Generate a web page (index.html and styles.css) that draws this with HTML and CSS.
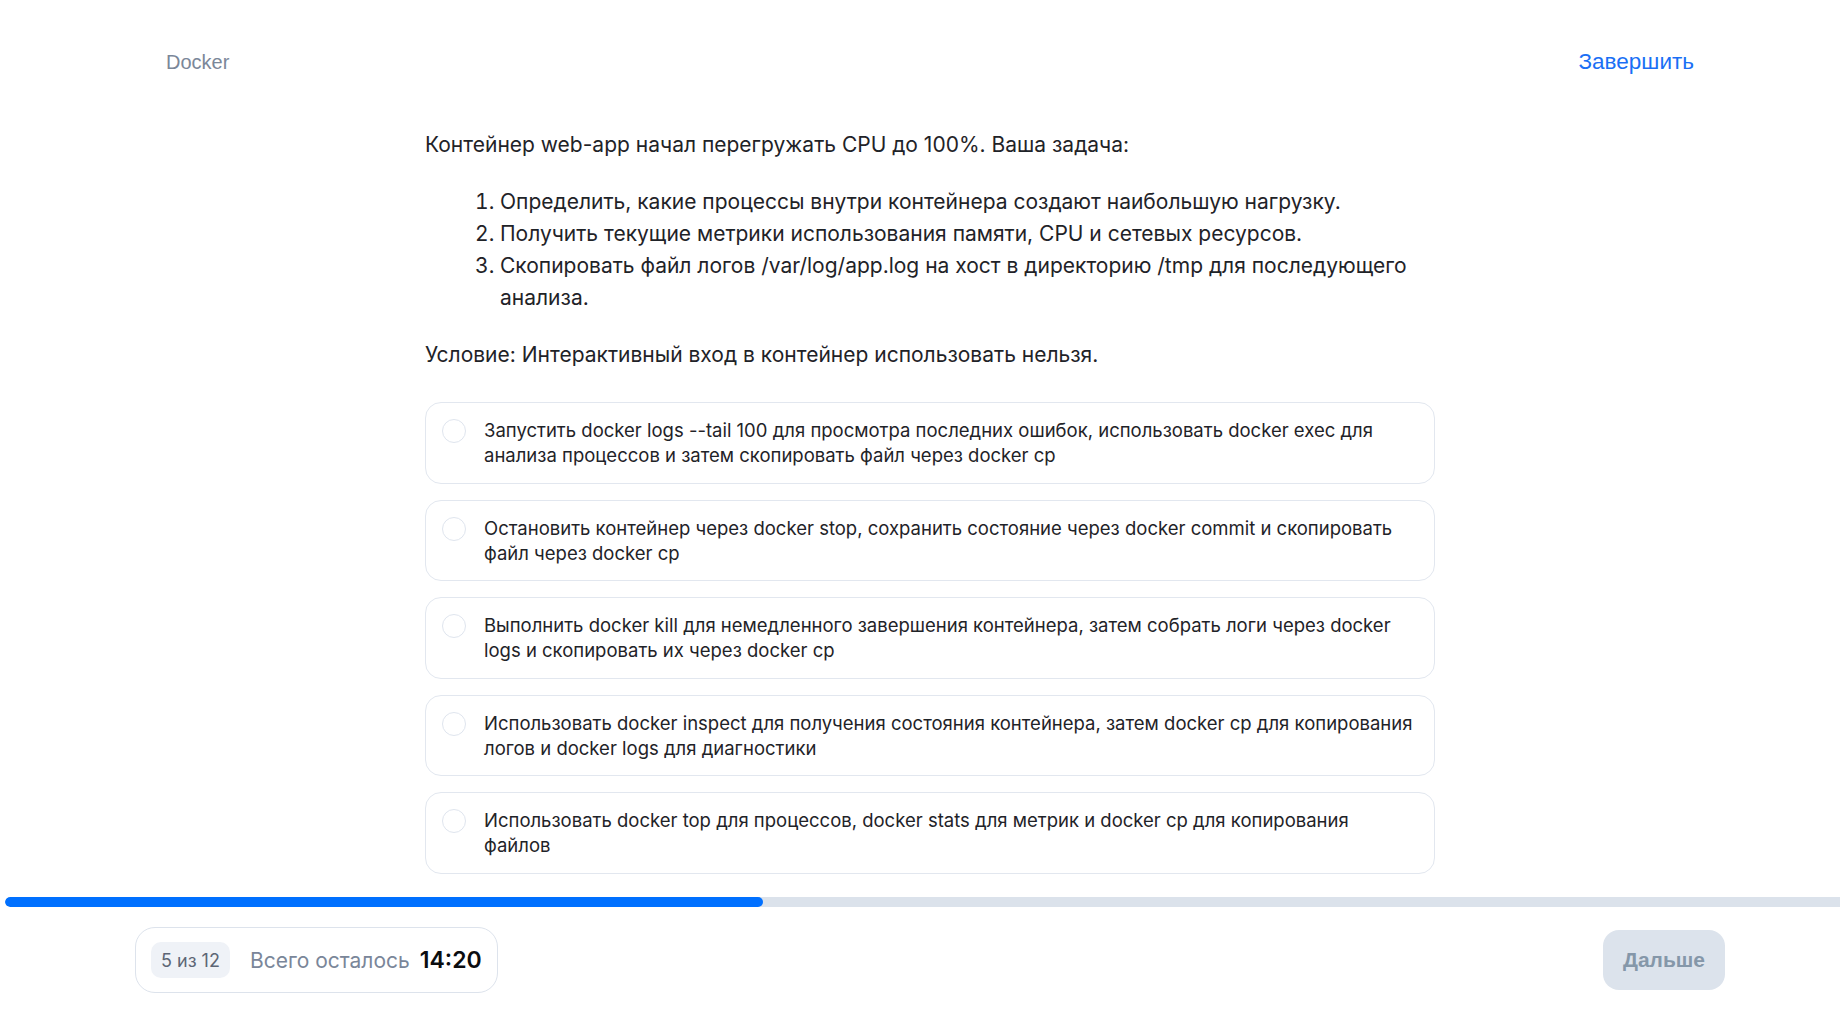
FILE: index.html
```html
<!DOCTYPE html>
<html lang="ru">
<head>
<meta charset="utf-8">
<title>Docker — вопрос 5 из 12</title>
<link rel="stylesheet" href="styles.css">
</head>
<body>
<div class="page">
  <div class="scroll">
    <header class="header">
      <span class="topic">Docker</span>
      <a class="finish" href="#">Завершить</a>
    </header>
    <main class="question">
      <p class="q-text">Контейнер web-app начал перегружать CPU до 100%. Ваша задача:</p>
      <ol class="q-list">
        <li>Определить, какие процессы внутри контейнера создают наибольшую нагрузку.</li>
        <li>Получить текущие метрики использования памяти, CPU и сетевых ресурсов.</li>
        <li>Скопировать файл логов /var/log/app.log на хост в директорию /tmp для последующего анализа.</li>
      </ol>
      <p class="q-text q-cond">Условие: Интерактивный вход в контейнер использовать нельзя.</p>
      <div class="options">
        <label class="option"><span class="radio"></span><span class="opt-text">Запустить docker logs --tail 100 для просмотра последних ошибок, использовать docker exec для анализа процессов и затем скопировать файл через docker cp</span></label>
        <label class="option"><span class="radio"></span><span class="opt-text">Остановить контейнер через docker stop, сохранить состояние через docker commit и скопировать файл через docker cp</span></label>
        <label class="option"><span class="radio"></span><span class="opt-text">Выполнить docker kill для немедленного завершения контейнера, затем собрать логи через docker logs и скопировать их через docker cp</span></label>
        <label class="option"><span class="radio"></span><span class="opt-text">Использовать docker inspect для получения состояния контейнера, затем docker cp для копирования логов и docker logs для диагностики</span></label>
        <label class="option"><span class="radio"></span><span class="opt-text">Использовать docker top для процессов, docker stats для метрик и docker cp для копирования файлов</span></label>
      </div>
    </main>
  </div>
  <footer class="footer">
    <div class="progress"><div class="progress-fill" style="width: 41.3%"></div></div>
    <div class="footer-row">
      <div class="timer-box">
        <span class="counter">5 из 12</span>
        <span class="left-label">Всего осталось</span>
        <span class="time">14:20</span>
      </div>
      <button class="next" type="button">Дальше</button>
    </div>
  </footer>
</div>
</body>
</html>
```

FILE: styles.css
```css
* { box-sizing: border-box; }

html, body {
  margin: 0;
  padding: 0;
  height: 100%;
  background: #ffffff;
}

body {
  font-family: Inter, "Noto Sans", sans-serif;
  color: #1f2328;
}

.page {
  height: 100vh;
  display: flex;
  flex-direction: column;
  overflow: hidden;
}

.scroll {
  flex: 1;
  min-height: 0;
  overflow: hidden;
  padding-left: 20px;
}

.header {
  max-width: 1560px;
  margin: 0 auto;
  height: 124px;
  padding: 0 16px;
  display: flex;
  align-items: center;
  justify-content: space-between;
  font-family: "Liberation Sans", Arial, sans-serif;
  font-size: 20px;
}

.topic {
  color: #7b8799;
}

.finish {
  color: #1a6ff5;
  font-size: 22.5px;
  text-decoration: none;
}

.question {
  width: 1010px;
  margin: 0 auto;
  padding-top: 5px;
}

.q-text {
  margin: 0;
  font-size: 21px;
  line-height: 32px;
}

.q-list {
  margin: 25px 0;
  padding-left: 75px;
  font-size: 21px;
  line-height: 32px;
}

.q-list li {
  padding-left: 0;
}

.q-cond {
  margin-bottom: 31px;
}

.options {
  display: flex;
  flex-direction: column;
  gap: 16px;
}

.option {
  display: flex;
  align-items: flex-start;
  gap: 18px;
  border: 1px solid #e2e7ef;
  border-radius: 16px;
  padding: 15px 16px 14.5px;
  font-size: 18.5px;
  line-height: 25px;
  cursor: pointer;
}

.radio {
  flex: 0 0 24px;
  width: 24px;
  height: 24px;
  margin-top: 1px;
  border: 1.5px solid #dfe5ee;
  border-radius: 50%;
}

.opt-text {
  flex: 1;
}

.footer {
  flex: 0 0 auto;
}

.progress {
  margin-left: 5px;
  height: 10px;
  background: #dbe2eb;
  border-radius: 5px 0 0 5px;
  overflow: hidden;
}

.progress-fill {
  height: 100%;
  background: #0070ff;
  border-radius: 5px;
}

.footer-row {
  display: flex;
  align-items: center;
  justify-content: space-between;
  max-width: 1610px;
  margin: 0 auto;
  padding: 20px 0 21px 20px;
}

.timer-box {
  display: flex;
  align-items: center;
  height: 66px;
  padding: 0 15px;
  border: 1px solid #dde3ec;
  border-radius: 20px;
}

.counter {
  display: inline-flex;
  align-items: center;
  height: 36px;
  padding: 0 10px;
  border-radius: 10px;
  background: #eff2f7;
  color: #5d6675;
  font-size: 18px;
}

.left-label {
  margin-left: 20px;
  color: #7a8699;
  font-size: 21px;
}

.time {
  margin-left: 10px;
  color: #0b0d10;
  font-size: 23px;
  font-weight: 600;
}

.next {
  height: 60px;
  padding: 0 20px;
  border: none;
  border-radius: 16px;
  background: #dce3ec;
  color: #8597a9;
  font-family: "Liberation Sans", Arial, sans-serif;
  font-size: 21px;
  font-weight: 700;
}
```
